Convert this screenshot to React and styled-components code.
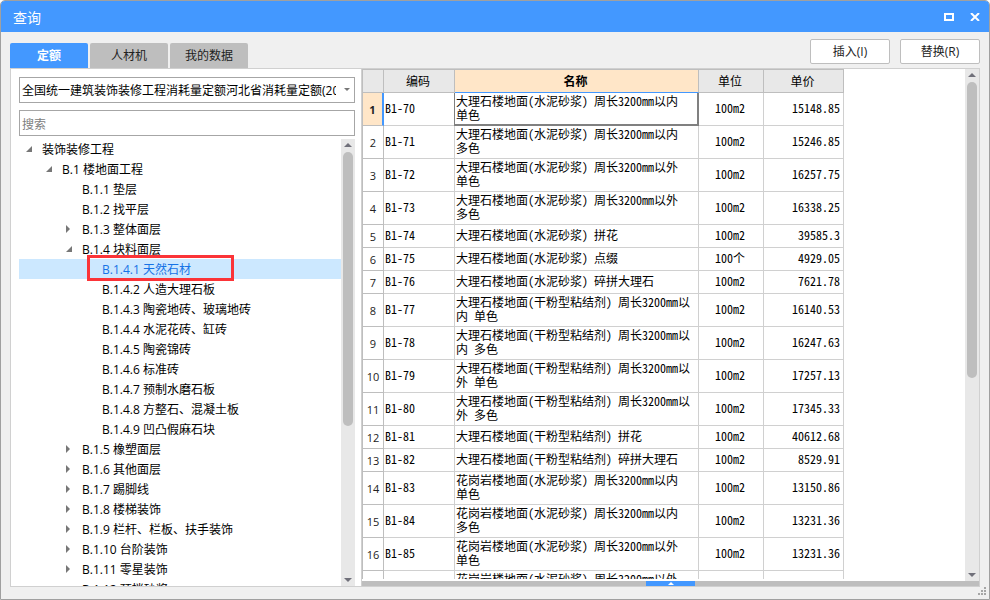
import React, { useState } from "react";
import styled, { createGlobalStyle, css } from "styled-components";

const UI_FONT = `"Open Sans", "Noto Sans CJK SC", sans-serif`;
const GRID_FONT = `"Noto Sans Mono CJK SC", "Noto Sans CJK SC", sans-serif`;

const TABS = ["定额", "人材机", "我的数据"];

const TREE = [
  { depth: 0, name: "装饰装修工程", state: "open" },
  { depth: 1, name: "B.1 楼地面工程", state: "open" },
  { depth: 2, name: "B.1.1 垫层" },
  { depth: 2, name: "B.1.2 找平层" },
  { depth: 2, name: "B.1.3 整体面层", state: "closed" },
  { depth: 2, name: "B.1.4 块料面层", state: "open" },
  { depth: 3, name: "B.1.4.1 天然石材" },
  { depth: 3, name: "B.1.4.2 人造大理石板" },
  { depth: 3, name: "B.1.4.3 陶瓷地砖、玻璃地砖" },
  { depth: 3, name: "B.1.4.4 水泥花砖、缸砖" },
  { depth: 3, name: "B.1.4.5 陶瓷锦砖" },
  { depth: 3, name: "B.1.4.6 标准砖" },
  { depth: 3, name: "B.1.4.7 预制水磨石板" },
  { depth: 3, name: "B.1.4.8 方整石、混凝土板" },
  { depth: 3, name: "B.1.4.9 凹凸假麻石块" },
  { depth: 2, name: "B.1.5 橡塑面层", state: "closed" },
  { depth: 2, name: "B.1.6 其他面层", state: "closed" },
  { depth: 2, name: "B.1.7 踢脚线", state: "closed" },
  { depth: 2, name: "B.1.8 楼梯装饰", state: "closed" },
  { depth: 2, name: "B.1.9 栏杆、栏板、扶手装饰", state: "closed" },
  { depth: 2, name: "B.1.10 台阶装饰", state: "closed" },
  { depth: 2, name: "B.1.11 零星装饰", state: "closed" },
  { depth: 2, name: "B.1.12 预拌砂浆" },
];

const ROWS = [
  ["B1-70", "大理石楼地面(水泥砂浆) 周长3200mm以内\n单色", "100m2", "15148.85"],
  ["B1-71", "大理石楼地面(水泥砂浆) 周长3200mm以内\n多色", "100m2", "15246.85"],
  ["B1-72", "大理石楼地面(水泥砂浆) 周长3200mm以外\n单色", "100m2", "16257.75"],
  ["B1-73", "大理石楼地面(水泥砂浆) 周长3200mm以外\n多色", "100m2", "16338.25"],
  ["B1-74", "大理石楼地面(水泥砂浆) 拼花", "100m2", "39585.3"],
  ["B1-75", "大理石楼地面(水泥砂浆) 点缀", "100个", "4929.05"],
  ["B1-76", "大理石楼地面(水泥砂浆) 碎拼大理石", "100m2", "7621.78"],
  ["B1-77", "大理石楼地面(干粉型粘结剂) 周长3200mm以\n内 单色", "100m2", "16140.53"],
  ["B1-78", "大理石楼地面(干粉型粘结剂) 周长3200mm以\n内 多色", "100m2", "16247.63"],
  ["B1-79", "大理石楼地面(干粉型粘结剂) 周长3200mm以\n外 单色", "100m2", "17257.13"],
  ["B1-80", "大理石楼地面(干粉型粘结剂) 周长3200mm以\n外 多色", "100m2", "17345.33"],
  ["B1-81", "大理石楼地面(干粉型粘结剂) 拼花", "100m2", "40612.68"],
  ["B1-82", "大理石楼地面(干粉型粘结剂) 碎拼大理石", "100m2", "8529.91"],
  ["B1-83", "花岗岩楼地面(水泥砂浆) 周长3200mm以内\n单色", "100m2", "13150.86"],
  ["B1-84", "花岗岩楼地面(水泥砂浆) 周长3200mm以内\n多色", "100m2", "13231.36"],
  ["B1-85", "花岗岩楼地面(水泥砂浆) 周长3200mm以外\n单色", "100m2", "13231.36"],
  ["B1-86", "花岗岩楼地面(水泥砂浆) 周长3200mm以外\n多色", "100m2", "13311.86"],
];

const ScrollRail = ({ size }) => (
  <Rail aria-hidden="true">
    <RailArrow viewBox="0 0 8 4">
      <path d="M4 0 8 4H0Z" />
    </RailArrow>
    <RailTrack>
      <RailThumb $size={size} />
    </RailTrack>
    <RailArrow viewBox="0 0 8 4">
      <path d="M0 0H8L4 4Z" />
    </RailArrow>
  </Rail>
);

const Expander = ({ state }) => (
  <ExpanderIcon viewBox="0 0 7 8" aria-hidden="true">
    {state === "open" && <path d="M6 1V7H0Z" />}
    {state === "closed" && <path d="M0 0 4 4 0 8Z" />}
  </ExpanderIcon>
);

const App = () => {
  const [tab, setTab] = useState(0);
  const [node, setNode] = useState(6);
  const [row, setRow] = useState(0);
  const [keyword, setKeyword] = useState("");

  return (
    <>
      <GlobalStyle />
      <Window>
        <TitleBar>
          <Title>查询</Title>
          <WindowButton aria-label="最大化">
            <svg width="10" height="8" viewBox="0 0 10 8">
              <path d="M0 0H10V8H0ZM2 2V6H8V2Z" fill="#fff" fillRule="evenodd" />
            </svg>
          </WindowButton>
          <WindowButton aria-label="关闭">
            <svg width="10" height="8" viewBox="0 0 10 8">
              <path d="M1 0 9 8M9 0 1 8" stroke="#fff" strokeWidth="2" />
            </svg>
          </WindowButton>
        </TitleBar>

        <Toolbar>
          <Tabs role="tablist">
            {TABS.map((name, i) => (
              <Tab
                key={name}
                role="tab"
                aria-selected={i === tab}
                $active={i === tab}
                onClick={() => setTab(i)}
              >
                {name}
              </Tab>
            ))}
          </Tabs>
          <Actions>
            <ActionButton>插入(I)</ActionButton>
            <ActionButton>替换(R)</ActionButton>
          </Actions>
        </Toolbar>

        <Content>
          <Sidebar>
            <SelectBox>
              <Select aria-label="定额库">
                <option>
                  全国统一建筑装饰装修工程消耗量定额河北省消耗量定额(2012)
                </option>
              </Select>
              <SelectArrow viewBox="0 0 6 3" aria-hidden="true">
                <path d="M0 0H6L3 3Z" />
              </SelectArrow>
            </SelectBox>
            <Search
              aria-label="搜索"
              placeholder="搜索"
              value={keyword}
              onChange={e => setKeyword(e.target.value)}
            />
            <TreeArea>
              <Tree role="tree">
                {TREE.map(({ depth, name, state }, i) => (
                  <TreeItem
                    key={name}
                    role="treeitem"
                    aria-selected={i === node}
                    $depth={depth}
                    $selected={i === node}
                    onClick={() => setNode(i)}
                  >
                    <Expander state={state} />
                    <TreeLabel>{name}</TreeLabel>
                    {i === node && <Highlight />}
                  </TreeItem>
                ))}
              </Tree>
              <ScrollRail size={65} />
            </TreeArea>
          </Sidebar>

          <Main>
            <GridArea>
              <GridClip>
                <Table>
                  <colgroup>
                    <NumberCol />
                    <CodeCol />
                    <NameCol />
                    <UnitCol />
                    <PriceCol />
                  </colgroup>
                  <thead>
                    <tr>
                      <HeadCell aria-label="序号" />
                      <HeadCell>编码</HeadCell>
                      <HeadCell $current>名称</HeadCell>
                      <HeadCell>单位</HeadCell>
                      <HeadCell>单价</HeadCell>
                    </tr>
                  </thead>
                  <tbody>
                    {ROWS.map(([code, name, unit, price], i) => (
                      <Row
                        key={code}
                        $tall={name.includes("\n")}
                        onClick={() => setRow(i)}
                      >
                        <NumberCell scope="row" $current={i === row}>
                          {i + 1}
                        </NumberCell>
                        <Cell>{code}</Cell>
                        <Cell $focused={i === row}>{name}</Cell>
                        <Cell $align="center">{unit}</Cell>
                        <Cell $align="right">{price}</Cell>
                      </Row>
                    ))}
                  </tbody>
                </Table>
              </GridClip>
              <ScrollRail size={61} />
            </GridArea>
            <Splitter>
              <SplitterHandle aria-label="展开">
                <svg width="6" height="3" viewBox="0 0 6 3">
                  <path d="M3 0 6 3H0Z" fill="#fff" />
                </svg>
              </SplitterHandle>
            </Splitter>
          </Main>
        </Content>

        <StatusBar>
          <svg width="8" height="8" viewBox="0 0 8 8" fill="#a6a6a6" aria-hidden="true">
            <path d="M6 0h2v2h-2zM3 3h2v2h-2zM6 3h2v2h-2zM0 6h2v2h-2zM3 6h2v2h-2zM6 6h2v2h-2z" />
          </svg>
        </StatusBar>
      </Window>
    </>
  );
};

const GlobalStyle = createGlobalStyle`
  * {
    box-sizing: border-box;
  }

  body {
    margin: 0;
    background: #fff;
    color: #000;
    font: 12px/20px ${UI_FONT};
  }

  button, input, select {
    margin: 0;
    font: inherit;
    color: inherit;
  }
`;

const Window = styled.div`
  height: 100vh;
  display: flex;
  flex-direction: column;
  overflow: hidden;
  background: #f0f0f0;
  border: 1px solid #a0a0a0;
  border-radius: 5px 5px 0 0;
`;

const TitleBar = styled.header`
  flex: none;
  height: 31px;
  padding: 0 1px 0 12px;
  display: flex;
  align-items: center;
  background: #4398ff;
  color: #fff;
`;

const Title = styled.h1`
  flex: 1;
  margin: 0;
  padding-top: 2px;
  font-size: 14px;
  font-weight: 400;
`;

const WindowButton = styled.button`
  width: 26px;
  height: 30px;
  padding: 0;
  display: flex;
  align-items: center;
  justify-content: center;
  background: none;
  border: 0;
`;

const Toolbar = styled.div`
  flex: none;
  height: 36px;
  padding: 0 9px;
  display: flex;
  align-items: flex-end;
  justify-content: space-between;
`;

const Tabs = styled.div`
  display: flex;
  gap: 2px;
`;

const Tab = styled.button`
  width: 78px;
  height: 25px;
  padding: 0;
  border: 0;
  border-radius: 2px 2px 0 0;
  background: ${({ $active }) => ($active ? "#4398ff" : "#bebebe")};
  color: ${({ $active }) => ($active ? "#fff" : "#222")};
  font-weight: ${({ $active }) => ($active ? 700 : 400)};
`;

const Actions = styled.div`
  padding-bottom: 4px;
  display: flex;
  gap: 10px;
`;

const ActionButton = styled.button`
  width: 80px;
  height: 25px;
  padding: 0;
  background: #fff;
  border: 1px solid #bebebe;
  border-radius: 2px;
  color: #222;
`;

const Content = styled.div`
  flex: 1;
  min-height: 0;
  margin: 0 9px;
  display: flex;
  background: #fff;
  border: 1px solid #d0d0d0;
`;

const Sidebar = styled.aside`
  flex: none;
  width: 351px;
  padding: 8px 6px 0 8px;
  display: flex;
  flex-direction: column;
  border-right: 1px solid #d0d0d0;
`;

const SelectBox = styled.div`
  position: relative;
  margin-bottom: 7px;
`;

const Select = styled.select`
  display: block;
  width: 100%;
  height: 26px;
  padding: 2px 18px 0 2px;
  appearance: none;
  background: #fff;
  border: 1px solid #a6a6a6;
  border-radius: 0;
`;

const SelectArrow = styled.svg`
  position: absolute;
  top: 11px;
  right: 5px;
  width: 6px;
  height: 3px;
  fill: #777;
  pointer-events: none;
`;

const Search = styled.input`
  width: 100%;
  height: 26px;
  margin-bottom: 3px;
  padding: 2px 2px 0;
  background: #fff;
  border: 1px solid #a6a6a6;
  border-radius: 0;

  &::placeholder {
    color: #808080;
  }
`;

const TreeArea = styled.div`
  flex: 1;
  min-height: 0;
  display: flex;
`;

const Tree = styled.ul`
  flex: 1;
  margin: 0;
  padding: 0;
  overflow: hidden;
  list-style: none;
`;

const TreeItem = styled.li`
  position: relative;
  height: 20px;
  padding-left: ${({ $depth }) => $depth * 20 + 7}px;
  display: flex;
  align-items: center;
  gap: 9px;
  white-space: nowrap;
  cursor: default;

  ${({ $selected }) =>
    $selected &&
    css`
      background: #cce8ff;
      color: #1673e6;
    `}
`;

const TreeLabel = styled.span`
  padding-top: 2px;
`;

const ExpanderIcon = styled.svg`
  flex: none;
  width: 7px;
  height: 8px;
  fill: #777;
`;

const Highlight = styled.span`
  position: absolute;
  top: -4px;
  left: 68px;
  width: 147px;
  height: 26px;
  border: 3px solid #fb3438;
  z-index: 1;
`;

const Rail = styled.div`
  flex: none;
  width: 14px;
  padding: 4px 0;
  display: flex;
  flex-direction: column;
  align-items: center;
  background: #e8e8e8;
`;

const RailArrow = styled.svg`
  flex: none;
  width: 8px;
  height: 4px;
  fill: #70707a;
`;

const RailTrack = styled.div`
  flex: 1;
  width: 10px;
  margin: 5px 0;
`;

const RailThumb = styled.div`
  height: ${({ $size }) => $size}%;
  background: #bebebe;
  border-radius: 5px;
`;

const Main = styled.main`
  flex: 1;
  min-width: 0;
  display: flex;
  flex-direction: column;
`;

const GridArea = styled.div`
  flex: 1;
  min-height: 0;
  display: flex;
`;

const GridClip = styled.div`
  flex: 1;
  min-width: 0;
  margin-bottom: 2px;
  overflow: hidden;
`;

const Table = styled.table`
  width: 482px;
  table-layout: fixed;
  border-collapse: separate;
  border-spacing: 0;
  border-left: 1px solid #bebebe;
  font: 12px/14px ${GRID_FONT};
`;

const NumberCol = styled.col`
  width: 21px;
`;

const CodeCol = styled.col`
  width: 71px;
`;

const NameCol = styled.col`
  width: 244px;
`;

const UnitCol = styled.col`
  width: 65px;
`;

const PriceCol = styled.col`
  width: 80px;
`;

const HeadCell = styled.th`
  height: 24px;
  padding: 0 2px 0 0;
  background: ${({ $current }) => ($current ? "#ffe6c8" : "#e8e8e8")};
  border: 1px solid #bebebe;
  border-left: 0;
  border-bottom-color: ${({ $current }) => ($current ? "#4398ff" : "#bebebe")};
  font-weight: ${({ $current }) => ($current ? 700 : 400)};
`;

const Row = styled.tr`
  height: ${({ $tall }) => ($tall ? 33 : 23)}px;
`;

const NumberCell = styled.th`
  padding: 2px 0 0;
  background: ${({ $current }) => ($current ? "#ffe6c8" : "#fff")};
  border-bottom: 1px solid #bebebe;
  border-right: ${({ $current }) =>
    $current ? "2px solid #4398ff" : "1px solid #bebebe"};
  color: #222;
  font-family: ${UI_FONT};
  font-size: 11px;
  font-weight: ${({ $current }) => ($current ? 700 : 400)};
`;

const Cell = styled.td`
  padding: 0 3px 2px 1px;
  border: 0 solid #d0d0d0;
  border-width: 0 1px 1px 0;
  text-align: ${({ $align }) => $align || "left"};
  white-space: pre;

  ${({ $focused }) =>
    $focused &&
    css`
      padding: 0 1px 1px;
      border-color: #808080;
      border-width: 0 2px 2px 0;
      box-shadow: -1px 0 #808080;
    `}
`;

const Splitter = styled.div`
  flex: none;
  height: 5px;
  display: flex;
  justify-content: center;
  background: #bebebe;
`;

const SplitterHandle = styled.button`
  width: 49px;
  height: 5px;
  padding: 0;
  display: flex;
  align-items: center;
  justify-content: center;
  background: #4398ff;
  border: 0;
`;

const StatusBar = styled.footer`
  flex: none;
  height: 12px;
  padding: 0 3px 4px 0;
  display: flex;
  align-items: flex-end;
  justify-content: flex-end;
`;

export default App;
